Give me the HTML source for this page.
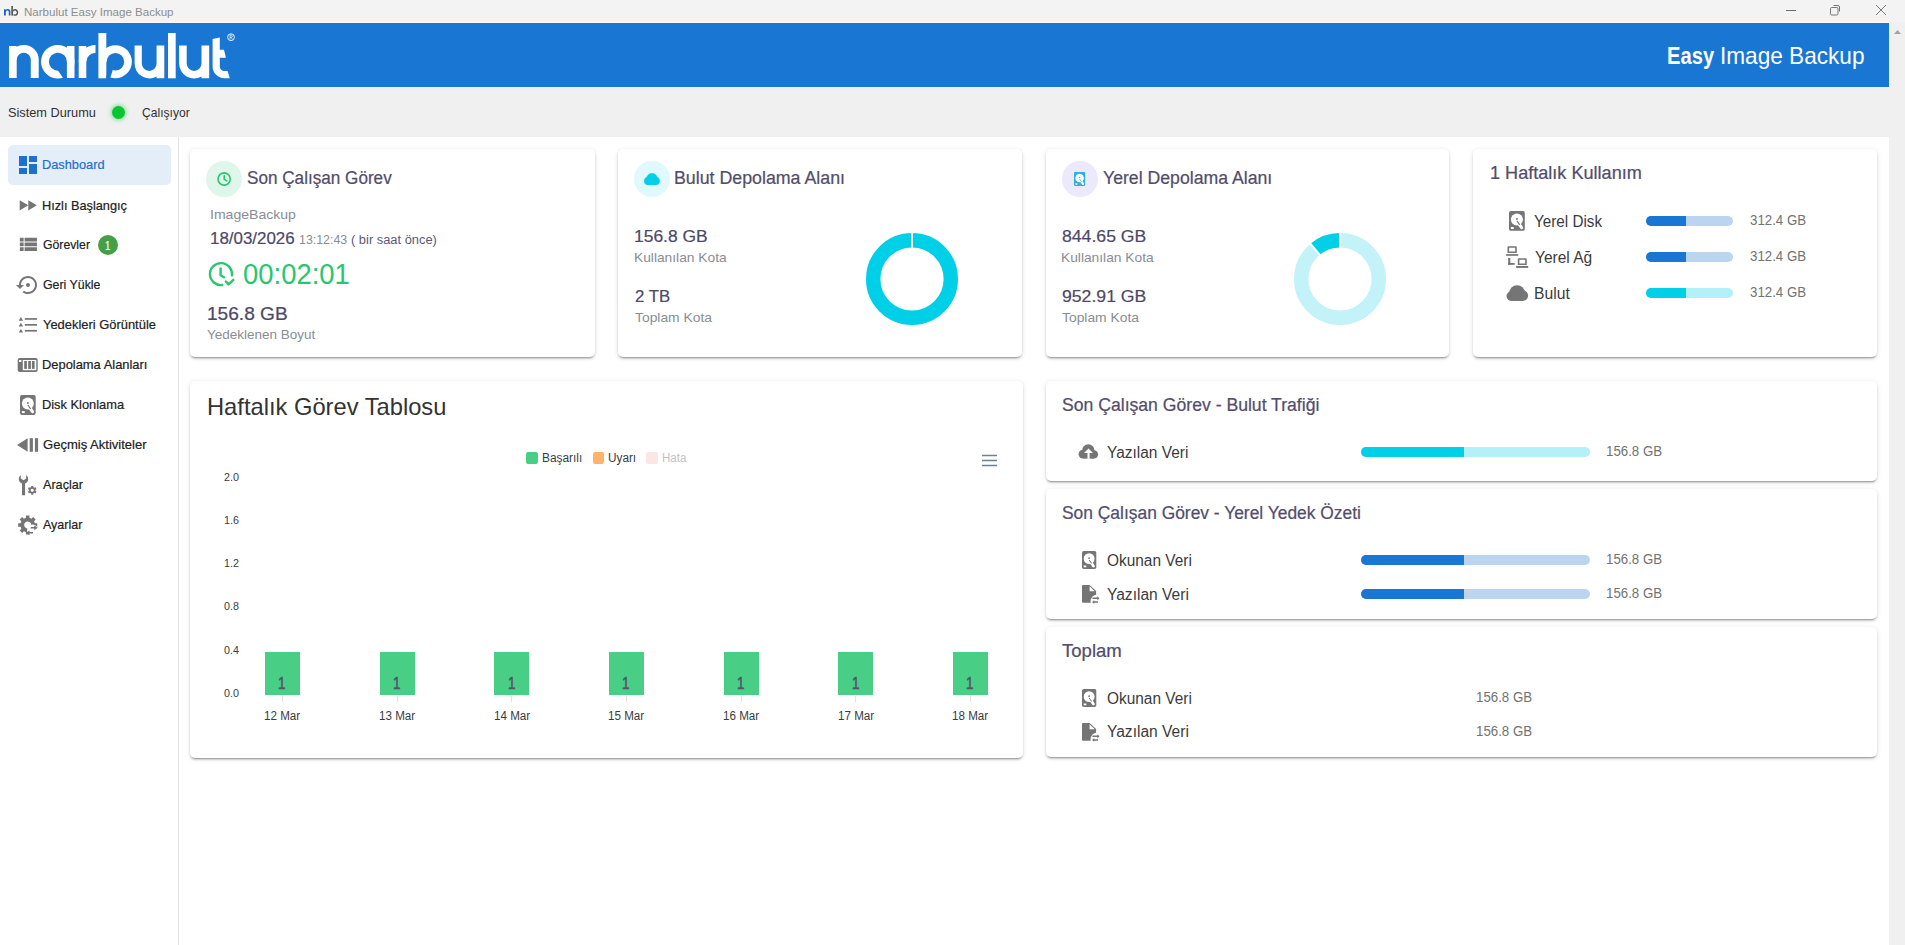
<!DOCTYPE html>
<html><head><meta charset="utf-8"><title>Narbulut Easy Image Backup</title>
<style>
html,body{margin:0;padding:0;}
body{width:1905px;height:945px;position:relative;overflow:hidden;background:#fff;font-family:"Liberation Sans",sans-serif;}
.t{position:absolute;white-space:nowrap;line-height:1;transform-origin:0 0;}
.a{position:absolute;}
.card{position:absolute;background:#fff;border-radius:5px;box-shadow:0 3px 1px -2px rgba(0,0,0,.2),0 2px 2px 0 rgba(0,0,0,.14),0 1px 5px 0 rgba(0,0,0,.12);}
svg{position:absolute;overflow:visible;}
</style></head><body>
<!-- title bar -->
<div class="a" style="left:0;top:0;width:1905px;height:22px;background:#f3f3f3"></div>
<div class="a" style="left:0;top:22px;width:1889px;height:1px;background:#fbf8f6"></div>
<div class="a" style="left:1889px;top:22px;width:16px;height:923px;background:#f0f0f0"></div>
<svg style="left:0;top:0" width="30" height="22" viewBox="0 0 30 22">
  <path d="M4 15.6V9.2h1.6v0.9c0.5-0.7 1.3-1.1 2.2-1.1 1.6 0 2.6 1 2.6 2.8v3.8H8.8v-3.6c0-1-0.5-1.6-1.4-1.6-0.9 0-1.6 0.6-1.6 1.7v3.5z" fill="#1565c0"/>
  <path d="M11.3 15.6V6.1h1.6v3.8c0.5-0.6 1.2-0.9 2.1-0.9 1.9 0 3.2 1.4 3.2 3.4s-1.4 3.4-3.3 3.4c-0.6 0-1.2-0.2-1.6-0.4l0.5-1.3c0.3 0.2 0.7 0.3 1.1 0.3 1.1 0 1.8-0.8 1.8-2s-0.8-2-1.8-2c-1.1 0-1.9 0.8-1.9 2.1v3.1z" fill="#555"/>
</svg>
<!-- window controls -->
<div class="a" style="left:1786px;top:10px;width:10px;height:1px;background:#6b6b6b"></div>
<svg style="left:1828px;top:4px" width="14" height="13" viewBox="0 0 14 13">
  <path d="M5.5 1.5h4.5a1.5 1.5 0 0 1 1.5 1.5v4.5" fill="none" stroke="#777" stroke-width="1"/>
  <rect x="2.5" y="3.5" width="7.5" height="7.5" rx="1.2" fill="none" stroke="#777" stroke-width="1"/>
</svg>
<svg style="left:1875px;top:4px" width="12" height="12" viewBox="0 0 12 12">
  <path d="M1 1L11 11M11 1L1 11" stroke="#7a7a7a" stroke-width="1"/>
</svg>
<svg style="left:1893px;top:29px" width="9" height="6" viewBox="0 0 9 6"><path d="M1 5L4.5 1L8 5z" fill="#a3a3a3"/></svg>

<!-- header -->
<div class="a" style="left:0;top:23px;width:1889px;height:64px;background:#1976d2"></div>
<svg style="left:0;top:23px" width="250" height="64" viewBox="0 23 250 64">
 <g fill="#fff">
  <!-- n -->
  <path d="M9 46H16.7V78H9z"/>
  <path d="M9 59.85A14.85 14.85 0 0 1 38.7 59.85V78H30.8V59.85A7.05 7.05 0 0 0 16.7 59.85Z"/>
  <!-- a -->
  <path d="M66.9 46H74.5V78H66.9z"/>
  <path fill-rule="evenodd" d="M41 61.7a16.75 16.75 0 1 0 33.5 0a16.75 16.75 0 1 0 -33.5 0zM48.9 61.7a9 9 0 1 0 18 0a9 9 0 1 0 -18 0z"/>
  <!-- r -->
  <path d="M78.7 46H86.3V78H78.7z"/>
  <path d="M78.7 61.7A16.8 16.8 0 0 1 95.5 44.9V53A8.9 8.9 0 0 0 86.3 61.7Z"/>
  <!-- b -->
  <path d="M98.4 33H106.3V78.3H98.4z"/>
  <path fill-rule="evenodd" d="M98.9 61.7a16.5 16.5 0 1 0 33 0a16.5 16.5 0 1 0 -33 0zM106.6 61.7a8.8 8.8 0 1 0 17.6 0a8.8 8.8 0 1 0 -17.6 0z"/>
  <!-- u -->
  <path d="M134.6 45.5H141.8V63.6A7.4 7.4 0 0 0 156.6 63.6V45.5H164.3V78.3H156.6V76.6A14.85 14.85 0 0 1 134.6 63.6Z"/>
  <!-- l -->
  <path d="M168 33H175.7V78.3H168z"/>
  <!-- u -->
  <path d="M179.1 45.5H186.7V63.6A7.4 7.4 0 0 0 201.5 63.6V45.5H209.2V78.3H201.5V76.6A15.05 15.05 0 0 1 179.1 63.6Z"/>
  <!-- t -->
  <path d="M212.6 39L219.8 37.6V49.7H224L225.9 57.7H219.8V66.5A4.6 4.6 0 0 0 224.4 71.1H227.6L229.7 78.3H224.4A11.8 11.8 0 0 1 212.6 66.5Z"/>
  <circle cx="231" cy="37.2" r="3.4" fill="none" stroke="#fff" stroke-width="0.9"/>
  <path d="M230 39.3V35.2h1.3a1.05 1.05 0 0 1 0 2.1H230M231.2 37.3L232.3 39.3" fill="none" stroke="#fff" stroke-width="0.7"/>
 </g>
 <g fill="#1976d2">
  <path d="M58 70.6L61.5 66L66.9 61.7V80H64.4Z"/>
  <path d="M106.3 61.7L109.5 66L112.6 70.6L109.6 80H106.3Z"/>
 </g>
</svg>

<!-- status bar -->
<div class="a" style="left:0;top:87px;width:1889px;height:50px;background:#f0f0f0"></div>
<div class="a" style="left:112px;top:106px;width:13px;height:13px;border-radius:50%;background:#0ac532;box-shadow:0 0 4px 1px rgba(20,210,60,.55)"></div>

<!-- sidebar -->
<div class="a" style="left:178px;top:137px;width:1px;height:808px;background:#e3e3e3"></div>
<div class="a" style="left:8px;top:145px;width:163px;height:40px;border-radius:5px;background:#e4eef9"></div>
<!-- cards -->
<div class="card" style="left:190px;top:149px;width:405px;height:208px"></div>
<div class="card" style="left:618px;top:149px;width:404px;height:208px"></div>
<div class="card" style="left:1046px;top:149px;width:403px;height:208px"></div>
<div class="card" style="left:1473px;top:149px;width:404px;height:208px"></div>
<div class="card" style="left:190px;top:381px;width:833px;height:377px"></div>
<div class="card" style="left:1046px;top:381px;width:831px;height:100px"></div>
<div class="card" style="left:1046px;top:489px;width:831px;height:130px"></div>
<div class="card" style="left:1046px;top:627px;width:831px;height:130px"></div>

<!-- card icon circles -->
<div class="a" style="left:206px;top:161px;width:36px;height:36px;border-radius:50%;background:#e1f6ea"></div>
<div class="a" style="left:634px;top:161px;width:36px;height:36px;border-radius:50%;background:#e0f9fc"></div>
<div class="a" style="left:1062px;top:161px;width:36px;height:36px;border-radius:50%;background:#ebe9fb"></div>

<!-- donuts -->
<svg style="left:860px;top:227px" width="104" height="104" viewBox="-52 -52 104 104">
  <circle r="38.8" fill="none" stroke="#00cfe8" stroke-width="14.4"/>
  <rect x="-1" y="-47" width="2" height="16" fill="#fff"/>
</svg>
<svg style="left:1288px;top:227px" width="104" height="104" viewBox="-52 -52 104 104">
  <circle r="38.8" fill="none" stroke="#c3f2f8" stroke-width="14.4"/>
  <path d="M0 -46A46 46 0 0 0 -29.57 -35.24L-20.31 -24.20A31.6 31.6 0 0 1 0 -31.6Z" fill="#00cfe8"/>
  <rect x="-1" y="-47" width="2" height="16" fill="#fff"/>
  <path d="M-30.5 -36.3L-19.6 -23.3" stroke="#fff" stroke-width="2"/>
</svg>

<!-- card4 bars -->
<div class="a" style="left:1646px;top:216px;width:87px;height:10px;border-radius:5px;background:#bbd5f1;overflow:hidden"><div style="width:40px;height:10px;background:#1976d2"></div></div>
<div class="a" style="left:1646px;top:252px;width:87px;height:10px;border-radius:5px;background:#bbd5f1;overflow:hidden"><div style="width:40px;height:10px;background:#1976d2"></div></div>
<div class="a" style="left:1646px;top:288px;width:87px;height:10px;border-radius:5px;background:#b3f0f7;overflow:hidden"><div style="width:40px;height:10px;background:#00cfe8"></div></div>

<!-- right column bars -->
<div class="a" style="left:1361px;top:447px;width:229px;height:10px;border-radius:5px;background:#b3f0f7;overflow:hidden"><div style="width:103px;height:10px;background:#00cfe8"></div></div>
<div class="a" style="left:1361px;top:555px;width:229px;height:10px;border-radius:5px;background:#bbd5f1;overflow:hidden"><div style="width:103px;height:10px;background:#1976d2"></div></div>
<div class="a" style="left:1361px;top:589px;width:229px;height:10px;border-radius:5px;background:#bbd5f1;overflow:hidden"><div style="width:103px;height:10px;background:#1976d2"></div></div>

<!-- chart -->
<div class="a" style="left:526px;top:452px;width:12px;height:12px;border-radius:2px;background:#48cf85"></div>
<div class="a" style="left:593px;top:452px;width:11px;height:12px;border-radius:2px;background:#ffb36b"></div>
<div class="a" style="left:646px;top:452px;width:12px;height:12px;border-radius:2px;background:#fbe6e6"></div>
<svg style="left:981px;top:454px" width="18" height="14" viewBox="0 0 18 14"><path d="M1 1.5H16M1 6.5H16M1 11.5H16" stroke="#6e8192" stroke-width="1.6"/></svg>
<div class="a" style="left:265px;top:652px;width:35px;height:43px;background:#48cf85"></div>
<div class="a" style="left:380px;top:652px;width:35px;height:43px;background:#48cf85"></div>
<div class="a" style="left:494px;top:652px;width:35px;height:43px;background:#48cf85"></div>
<div class="a" style="left:609px;top:652px;width:35px;height:43px;background:#48cf85"></div>
<div class="a" style="left:724px;top:652px;width:35px;height:43px;background:#48cf85"></div>
<div class="a" style="left:838px;top:652px;width:35px;height:43px;background:#48cf85"></div>
<div class="a" style="left:953px;top:652px;width:35px;height:43px;background:#48cf85"></div>
<div class="a" style="left:282px;top:696px;width:1px;height:6px;background:#e0e0e0"></div>
<div class="a" style="left:397px;top:696px;width:1px;height:6px;background:#e0e0e0"></div>
<div class="a" style="left:511px;top:696px;width:1px;height:6px;background:#e0e0e0"></div>
<div class="a" style="left:626px;top:696px;width:1px;height:6px;background:#e0e0e0"></div>
<div class="a" style="left:741px;top:696px;width:1px;height:6px;background:#e0e0e0"></div>
<div class="a" style="left:855px;top:696px;width:1px;height:6px;background:#e0e0e0"></div>
<div class="a" style="left:970px;top:696px;width:1px;height:6px;background:#e0e0e0"></div>

<!-- sidebar icons -->
<svg style="left:16px;top:153px" width="24" height="24" viewBox="0 0 24 24"><path fill="#1e6fd0" d="M3 13h8V3H3v10zm0 8h8v-6H3v6zm10 0h8V11h-8v10zm0-18v6h8V3h-8z"/></svg>
<svg style="left:0;top:190px" width="40" height="30" viewBox="0 190 40 30"><path fill="#757575" d="M19.7 200.3L28.3 205.35L19.7 210.4ZM28.3 200.3L36.8 205.35L28.3 210.4Z"/></svg>
<svg style="left:16.95px;top:232.9px" width="22.8" height="22.8" viewBox="0 0 24 24"><path fill="#757575" d="M3 14h4v-4H3v4zm0 5h4v-4H3v4zM3 9h4V5H3v4zm5 5h13v-4H8v4zm0 5h13v-4H8v4zM8 5v4h13V5H8z"/></svg>
<svg style="left:16px;top:272.8px" width="24" height="24" viewBox="0 0 24 24"><path fill="#757575" d="M14 12c0-1.1-.9-2-2-2s-2 .9-2 2 .9 2 2 2 2-.9 2-2zm-2-9c-4.97 0-9 4.03-9 9H0l4 4 4-4H5c0-3.87 3.13-7 7-7s7 3.13 7 7-3.13 7-7 7c-1.51 0-2.91-.49-4.06-1.3l-1.42 1.44C8.04 20.3 9.94 21 12 21c4.97 0 9-4.03 9-9s-4.03-9-9-9z"/></svg>
<svg style="left:0;top:310px" width="40" height="30" viewBox="0 310 40 30"><g fill="#757575">
 <path d="M20.9 317.1L23.1 320.8H18.7Z M20.9 322.8L23.1 326.6H18.7Z M20.9 328.9L23.1 332.6H18.7Z"/>
 <rect x="24.8" y="318.1" width="12.2" height="1.7"/><rect x="24.8" y="324.0" width="12.2" height="1.7"/><rect x="24.8" y="329.9" width="12.2" height="1.7"/>
</g></svg>
<svg style="left:0;top:350px" width="40" height="30" viewBox="0 350 40 30">
 <rect x="17.7" y="358" width="20" height="13.9" rx="2" fill="#757575"/>
 <rect x="22.8" y="360" width="13.5" height="10.2" fill="#fff"/>
 <rect x="19" y="360" width="2.4" height="2" fill="#fff"/>
 <g fill="#757575"><rect x="24.2" y="361" width="2.7" height="7.9"/><rect x="28.2" y="361" width="2.7" height="7.9"/><rect x="31.9" y="361" width="2.7" height="7.9"/></g>
</svg>
<svg style="left:19.90px;top:394.90px" width="15.70" height="19.90" viewBox="0 0 15.70 19.90"><rect x="0" y="0" width="15.70" height="19.90" rx="1.88" fill="#757575"/><circle cx="7.85" cy="8.56" r="5.97" fill="#fff"/><circle cx="7.85" cy="7.96" r="1.02" fill="#757575"/><path d="M8.16 10.35L12.56 16.72" stroke="#fff" stroke-width="3.14" stroke-linecap="round"/><path d="M7.85 9.95L10.68 13.93" stroke="#757575" stroke-width="1.10"/><rect x="1.88" y="16.12" width="2.83" height="1.99" fill="#fff"/></svg>
<svg style="left:0;top:430px" width="40" height="30" viewBox="0 430 40 30"><g fill="#757575">
 <path d="M17.1 445L27.6 438.2V451.8Z"/><rect x="29.7" y="438.2" width="3.2" height="13.6"/><rect x="34.9" y="438.2" width="3.2" height="13.6"/>
</g></svg>
<svg style="left:0;top:470px" width="40" height="30" viewBox="0 470 40 30"><g fill="#757575">
 <path fill-rule="evenodd" d="M18.8 479A4.7 4.7 0 0 0 22 483.4V495.2H25.1V483.4A4.7 4.7 0 0 0 28.2 479A4.7 4.7 0 0 0 26.2 475.1V478.6L23.5 480.2L20.8 478.6V475.1A4.7 4.7 0 0 0 18.8 479Z"/>
 <path fill-rule="evenodd" d="M31.15 487.07 L31.15 485.92 L33.25 485.92 L33.25 487.07 L34.48 487.77 L35.46 487.20 L36.51 489.02 L35.53 489.59 L35.53 491.01 L36.51 491.58 L35.46 493.40 L34.48 492.83 L33.25 493.53 L33.25 494.68 L31.15 494.68 L31.15 493.53 L29.92 492.83 L28.94 493.40 L27.89 491.58 L28.87 491.01 L28.87 489.59 L27.89 489.02 L28.94 487.20 L29.92 487.77Z M32.2 488.7A1.6 1.6 0 1 0 32.21 488.7Z"/>
</g></svg>
<svg style="left:0;top:510px" width="40" height="30" viewBox="0 510 40 30">
 <path fill="#757575" fill-rule="evenodd" d="M25.92 517.82 L25.94 515.46 L29.46 515.46 L29.48 517.82 L31.52 518.66 L33.20 517.01 L35.69 519.50 L34.04 521.18 L34.88 523.22 L37.24 523.24 L37.24 526.76 L34.88 526.78 L34.04 528.82 L35.69 530.50 L33.20 532.99 L31.52 531.34 L29.48 532.18 L29.46 534.54 L25.94 534.54 L25.92 532.18 L23.88 531.34 L22.20 532.99 L19.71 530.50 L21.36 528.82 L20.52 526.78 L18.16 526.76 L18.16 523.24 L20.52 523.22 L21.36 521.18 L19.71 519.50 L22.20 517.01 L23.88 518.66Z M27.7 521.4A3.6 3.6 0 1 0 27.71 521.4Z"/>
 <circle cx="32.6" cy="530.2" r="5.6" fill="#fff"/>
 <path d="M27.7 525L32 525L28 530Z" fill="#fff"/>
 <g fill="#757575"><path d="M30.8 527H34.3V525.4L37.8 527.8L34.3 530.2V528.6H30.8Z"/><path d="M26 532.8L29.5 530.4V532H33V533.6H29.5V535.2Z"/></g>
</svg>

<!-- card icons -->
<svg style="left:200px;top:155px" width="50" height="50" viewBox="200 155 50 50"><g fill="none" stroke="#28c76f" stroke-width="1.6" stroke-linecap="round" stroke-linejoin="round">
 <circle cx="224.1" cy="179" r="6.1"/><path d="M224.2 175.9V179.2L226.8 180.9"/></g></svg>
<svg style="left:640px;top:170px" width="25" height="20" viewBox="640 170 25 20"><g fill="#00cfe8">
 <circle cx="652" cy="178.7" r="5.6"/><circle cx="648" cy="181" r="3.9"/><circle cx="655.9" cy="181" r="3.9"/><rect x="648" y="180" width="8" height="4.9"/>
</g></svg>
<svg style="left:1073.80px;top:171.90px" width="11.20" height="14.00" viewBox="0 0 11.20 14.00"><rect x="0" y="0" width="11.20" height="14.00" rx="1.34" fill="#2eb0da"/><circle cx="5.60" cy="6.02" r="4.26" fill="#fff"/><circle cx="5.60" cy="5.60" r="0.73" fill="#2eb0da"/><path d="M5.82 7.28L8.96 11.76" stroke="#fff" stroke-width="2.24" stroke-linecap="round"/><path d="M5.60 7.00L7.62 9.80" stroke="#2eb0da" stroke-width="0.78"/><rect x="1.34" y="11.34" width="2.02" height="1.40" fill="#fff"/></svg>
<svg style="left:200px;top:255px" width="40" height="35" viewBox="200 255 40 35"><g fill="none" stroke="#28c76f" stroke-width="2.4" stroke-linecap="round" stroke-linejoin="round">
 <path d="M222.3 285A11 11 0 1 1 231.9 275.3"/><path d="M220.6 268.4V275.3L224 277.2"/><path d="M225.9 281.6L228.6 284.4L233.3 279.8"/>
</g></svg>
<svg style="left:1509.40px;top:211.00px" width="15.80" height="19.80" viewBox="0 0 15.80 19.80"><rect x="0" y="0" width="15.80" height="19.80" rx="1.90" fill="#757575"/><circle cx="7.90" cy="8.51" r="6.00" fill="#fff"/><circle cx="7.90" cy="7.92" r="1.03" fill="#757575"/><path d="M8.22 10.30L12.64 16.63" stroke="#fff" stroke-width="3.16" stroke-linecap="round"/><path d="M7.90 9.90L10.74 13.86" stroke="#757575" stroke-width="1.11"/><rect x="1.90" y="16.04" width="2.84" height="1.98" fill="#fff"/></svg>
<svg style="left:1500px;top:240px" width="35" height="65" viewBox="1500 240 35 65"><g fill="#757575">
 <path fill-rule="evenodd" d="M1508.5 246.2h7.3a1 1 0 0 1 1 1v5.9h-9.3v-5.9a1 1 0 0 1 1-1zM1509.1 247.7v3.9h6.1v-3.9z"/>
 <rect x="1506.1" y="254.1" width="12.1" height="1.7"/>
 <rect x="1508.2" y="258" width="2.1" height="6.8"/><rect x="1508.2" y="263" width="6.5" height="1.8"/>
 <path fill-rule="evenodd" d="M1518.8 258.2h7a1 1 0 0 1 1 1v5.9h-9v-5.9a1 1 0 0 1 1-1zM1519.4 259.7v3.9h5.8v-3.9z"/>
 <rect x="1516.1" y="266" width="12.1" height="1.9"/>
 <circle cx="1517.1" cy="293.1" r="7.9"/><circle cx="1511.3" cy="296.1" r="4.8"/><circle cx="1522.8" cy="295.6" r="5.3"/><rect x="1511.3" y="293" width="11.5" height="7.9"/>
</g></svg>
<svg style="left:1074px;top:440px" width="30" height="22" viewBox="1074 440 30 22">
 <g fill="#757575"><circle cx="1088.3" cy="450.4" r="6.1"/><circle cx="1083" cy="454.2" r="4.4"/><circle cx="1093.9" cy="454.4" r="4.2"/><rect x="1083" y="452" width="11" height="6.6"/></g>
 <path d="M1088.5 448.6L1093 453.1H1084Z" fill="#fff"/><rect x="1087.5" y="452.5" width="2.1" height="6.3" fill="#fff"/>
</svg>
<svg style="left:1081.60px;top:550.80px" width="14.30" height="17.90" viewBox="0 0 14.30 17.90"><rect x="0" y="0" width="14.30" height="17.90" rx="1.72" fill="#757575"/><circle cx="7.15" cy="7.70" r="5.43" fill="#fff"/><circle cx="7.15" cy="7.16" r="0.93" fill="#757575"/><path d="M7.44 9.31L11.44 15.04" stroke="#fff" stroke-width="2.86" stroke-linecap="round"/><path d="M7.15 8.95L9.72 12.53" stroke="#757575" stroke-width="1.00"/><rect x="1.72" y="14.50" width="2.57" height="1.79" fill="#fff"/></svg>
<svg style="left:1081.60px;top:585.00px" width="20" height="20" viewBox="0 0 20 20">
 <path d="M1 0H7.6L14.1 6.1V16.8A1 1 0 0 1 13.1 17.8H1A1 1 0 0 1 0 16.8V1A1 1 0 0 1 1 0Z" fill="#757575"/>
 <path d="M7.6 1.3L12.8 6.3H7.6Z" fill="#fff"/>
 <circle cx="15.6" cy="16.5" r="7.1" fill="#fff"/>
 <g fill="#757575"><path d="M10.5 12.6H15.4V11.3L17.4 13.35L15.4 15.4V14.1H10.5Z"/><path d="M10.2 16.95L12.2 14.9V16.2H16V17.7H12.2V19Z"/></g>
</svg>
<svg style="left:1081.60px;top:689.00px" width="14.30" height="17.90" viewBox="0 0 14.30 17.90"><rect x="0" y="0" width="14.30" height="17.90" rx="1.72" fill="#757575"/><circle cx="7.15" cy="7.70" r="5.43" fill="#fff"/><circle cx="7.15" cy="7.16" r="0.93" fill="#757575"/><path d="M7.44 9.31L11.44 15.04" stroke="#fff" stroke-width="2.86" stroke-linecap="round"/><path d="M7.15 8.95L9.72 12.53" stroke="#757575" stroke-width="1.00"/><rect x="1.72" y="14.50" width="2.57" height="1.79" fill="#fff"/></svg>
<svg style="left:1081.60px;top:723.00px" width="20" height="20" viewBox="0 0 20 20">
 <path d="M1 0H7.6L14.1 6.1V16.8A1 1 0 0 1 13.1 17.8H1A1 1 0 0 1 0 16.8V1A1 1 0 0 1 1 0Z" fill="#757575"/>
 <path d="M7.6 1.3L12.8 6.3H7.6Z" fill="#fff"/>
 <circle cx="15.6" cy="16.5" r="7.1" fill="#fff"/>
 <g fill="#757575"><path d="M10.5 12.6H15.4V11.3L17.4 13.35L15.4 15.4V14.1H10.5Z"/><path d="M10.2 16.95L12.2 14.9V16.2H16V17.7H12.2V19Z"/></g>
</svg>
<div class="a" style="left:98px;top:235px;width:20px;height:20px;border-radius:50%;background:#43a047"></div>

<div class="t" style="left:23.60px;top:6.89px;font-size:11px;color:#8d8d8d;transform:scaleX(1.0496);">Narbulut Easy Image Backup</div>
<div class="t" style="left:1666.86px;top:44.08px;font-size:24px;color:#fff;font-weight:700;transform:scaleX(0.8402);">Easy</div>
<div class="t" style="left:1719.82px;top:44.08px;font-size:24px;color:#fff;transform:scaleX(0.9419);">Image Backup</div>
<div class="t" style="left:8.40px;top:106.29px;font-size:13px;color:#303030;transform:scaleX(0.9816);">Sistem Durumu</div>
<div class="t" style="left:141.70px;top:106.29px;font-size:13px;color:#303030;transform:scaleX(0.9296);">Çalışıyor</div>
<div class="t" style="left:42.32px;top:158.39px;font-size:13px;color:#1e6fd0;transform:scaleX(0.9829);-webkit-text-stroke:0.20px #1e6fd0;">Dashboard</div>
<div class="t" style="left:42.32px;top:198.69px;font-size:13px;color:#212121;transform:scaleX(0.9791);-webkit-text-stroke:0.20px #212121;">Hızlı Başlangıç</div>
<div class="t" style="left:43.30px;top:237.99px;font-size:13px;color:#212121;transform:scaleX(0.9422);-webkit-text-stroke:0.20px #212121;">Görevler</div>
<div class="t" style="left:43.30px;top:277.99px;font-size:13px;color:#212121;transform:scaleX(0.9510);-webkit-text-stroke:0.20px #212121;">Geri Yükle</div>
<div class="t" style="left:43.30px;top:317.99px;font-size:13px;color:#212121;transform:scaleX(0.9932);-webkit-text-stroke:0.20px #212121;">Yedekleri Görüntüle</div>
<div class="t" style="left:42.31px;top:357.99px;font-size:13px;color:#212121;transform:scaleX(0.9921);-webkit-text-stroke:0.20px #212121;">Depolama Alanları</div>
<div class="t" style="left:42.31px;top:398.19px;font-size:13px;color:#212121;transform:scaleX(0.9873);-webkit-text-stroke:0.20px #212121;">Disk Klonlama</div>
<div class="t" style="left:43.30px;top:437.99px;font-size:13px;color:#212121;transform:scaleX(1.0030);-webkit-text-stroke:0.20px #212121;">Geçmiş Aktiviteler</div>
<div class="t" style="left:43.30px;top:477.79px;font-size:13px;color:#212121;transform:scaleX(0.9702);-webkit-text-stroke:0.20px #212121;">Araçlar</div>
<div class="t" style="left:43.30px;top:518.09px;font-size:13px;color:#212121;transform:scaleX(0.9612);-webkit-text-stroke:0.20px #212121;">Ayarlar</div>
<div class="t" style="left:105.20px;top:239.64px;font-size:12px;color:#fff;transform:scaleX(0.8000);-webkit-text-stroke:0.20px #fff;">1</div>
<div class="t" style="left:247.20px;top:169.16px;font-size:18px;color:#524d6b;transform:scaleX(0.9515);-webkit-text-stroke:0.22px #524d6b;">Son Çalışan Görev</div>
<div class="t" style="left:209.66px;top:208.07px;font-size:13.5px;color:#8a8d93;transform:scaleX(1.0402);">ImageBackup</div>
<div class="t" style="left:209.94px;top:230.55px;font-size:16px;color:#4d4868;transform:scaleX(1.0571);-webkit-text-stroke:0.20px #4d4868;">18/03/2026</div>
<div class="t" style="left:298.70px;top:233.94px;font-size:12px;color:#8a8d93;transform:scaleX(1.0311);">13:12:43</div>
<div class="t" style="left:351.20px;top:233.94px;font-size:12px;color:#5d5877;transform:scaleX(1.0733);">( bir saat önce)</div>
<div class="t" style="left:243.25px;top:259.85px;font-size:29px;color:#28c76f;transform:scaleX(0.9462);">00:02:01</div>
<div class="t" style="left:206.67px;top:304.64px;font-size:18.5px;color:#4d4868;transform:scaleX(1.0322);-webkit-text-stroke:0.22px #4d4868;">156.8 GB</div>
<div class="t" style="left:206.90px;top:327.97px;font-size:13.5px;color:#8a8d93;">Yedeklenen Boyut</div>
<div class="t" style="left:674.41px;top:168.96px;font-size:18px;color:#524d6b;transform:scaleX(0.9878);-webkit-text-stroke:0.22px #524d6b;">Bulut Depolama Alanı</div>
<div class="t" style="left:634.17px;top:228.01px;font-size:17px;color:#4d4868;transform:scaleX(1.0257);-webkit-text-stroke:0.20px #4d4868;">156.8 GB</div>
<div class="t" style="left:633.74px;top:251.19px;font-size:13px;color:#8a8d93;transform:scaleX(1.0594);">Kullanılan Kota</div>
<div class="t" style="left:634.80px;top:287.61px;font-size:17px;color:#4d4868;transform:scaleX(0.9870);-webkit-text-stroke:0.20px #4d4868;">2 TB</div>
<div class="t" style="left:635.20px;top:310.79px;font-size:13px;color:#8a8d93;transform:scaleX(1.0653);">Toplam Kota</div>
<div class="t" style="left:1102.50px;top:168.96px;font-size:18px;color:#524d6b;transform:scaleX(0.9812);-webkit-text-stroke:0.22px #524d6b;">Yerel Depolama Alanı</div>
<div class="t" style="left:1062.00px;top:228.01px;font-size:17px;color:#4d4868;transform:scaleX(1.0378);-webkit-text-stroke:0.20px #4d4868;">844.65 GB</div>
<div class="t" style="left:1060.94px;top:251.19px;font-size:13px;color:#8a8d93;transform:scaleX(1.0594);">Kullanılan Kota</div>
<div class="t" style="left:1062.00px;top:287.61px;font-size:17px;color:#4d4868;transform:scaleX(1.0378);-webkit-text-stroke:0.20px #4d4868;">952.91 GB</div>
<div class="t" style="left:1062.00px;top:310.79px;font-size:13px;color:#8a8d93;transform:scaleX(1.0653);">Toplam Kota</div>
<div class="t" style="left:1489.70px;top:164.26px;font-size:18px;color:#524d6b;transform:scaleX(1.0049);-webkit-text-stroke:0.22px #524d6b;">1 Haftalık Kullanım</div>
<div class="t" style="left:1534.10px;top:213.95px;font-size:16px;color:#3b3b3b;transform:scaleX(0.9525);">Yerel Disk</div>
<div class="t" style="left:1534.80px;top:249.85px;font-size:16px;color:#3b3b3b;transform:scaleX(0.9695);">Yerel Ağ</div>
<div class="t" style="left:1533.82px;top:285.65px;font-size:16px;color:#3b3b3b;transform:scaleX(0.9799);">Bulut</div>
<div class="t" style="left:1749.50px;top:213.05px;font-size:14px;color:#737373;transform:scaleX(0.9488);">312.4 GB</div>
<div class="t" style="left:1749.50px;top:249.05px;font-size:14px;color:#737373;transform:scaleX(0.9488);">312.4 GB</div>
<div class="t" style="left:1749.50px;top:285.05px;font-size:14px;color:#737373;transform:scaleX(0.9488);">312.4 GB</div>
<div class="t" style="left:207.21px;top:394.98px;font-size:24px;color:#333333;transform:scaleX(0.9878);">Haftalık Görev Tablosu</div>
<div class="t" style="left:541.80px;top:452.34px;font-size:12px;color:#373d3f;transform:scaleX(0.9889);">Başarılı</div>
<div class="t" style="left:607.90px;top:452.34px;font-size:12px;color:#373d3f;transform:scaleX(0.9811);">Uyarı</div>
<div class="t" style="left:661.50px;top:452.34px;font-size:12px;color:#c2c2c2;transform:scaleX(0.9582);">Hata</div>
<div class="t" style="left:223.80px;top:687.89px;font-size:11px;color:#373d3f;transform:scaleX(0.9754);">0.0</div>
<div class="t" style="left:223.80px;top:644.69px;font-size:11px;color:#373d3f;transform:scaleX(0.9754);">0.4</div>
<div class="t" style="left:223.80px;top:601.49px;font-size:11px;color:#373d3f;transform:scaleX(0.9754);">0.8</div>
<div class="t" style="left:223.80px;top:558.29px;font-size:11px;color:#373d3f;transform:scaleX(0.9754);">1.2</div>
<div class="t" style="left:223.80px;top:515.09px;font-size:11px;color:#373d3f;transform:scaleX(0.9754);">1.6</div>
<div class="t" style="left:223.80px;top:471.89px;font-size:11px;color:#373d3f;transform:scaleX(0.9754);">2.0</div>
<div class="t" style="left:264.40px;top:710.14px;font-size:12px;color:#373d3f;transform:scaleX(0.9692);">12 Mar</div>
<div class="t" style="left:278.26px;top:675.75px;font-size:16px;color:#56516f;transform:scaleX(0.8375);-webkit-text-stroke:0.55px #56516f;">1</div>
<div class="t" style="left:379.05px;top:710.14px;font-size:12px;color:#373d3f;transform:scaleX(0.9692);">13 Mar</div>
<div class="t" style="left:392.91px;top:675.75px;font-size:16px;color:#56516f;transform:scaleX(0.8375);-webkit-text-stroke:0.55px #56516f;">1</div>
<div class="t" style="left:493.70px;top:710.14px;font-size:12px;color:#373d3f;transform:scaleX(0.9692);">14 Mar</div>
<div class="t" style="left:507.56px;top:675.75px;font-size:16px;color:#56516f;transform:scaleX(0.8375);-webkit-text-stroke:0.55px #56516f;">1</div>
<div class="t" style="left:608.35px;top:710.14px;font-size:12px;color:#373d3f;transform:scaleX(0.9692);">15 Mar</div>
<div class="t" style="left:622.21px;top:675.75px;font-size:16px;color:#56516f;transform:scaleX(0.8375);-webkit-text-stroke:0.55px #56516f;">1</div>
<div class="t" style="left:723.00px;top:710.14px;font-size:12px;color:#373d3f;transform:scaleX(0.9692);">16 Mar</div>
<div class="t" style="left:736.86px;top:675.75px;font-size:16px;color:#56516f;transform:scaleX(0.8375);-webkit-text-stroke:0.55px #56516f;">1</div>
<div class="t" style="left:837.65px;top:710.14px;font-size:12px;color:#373d3f;transform:scaleX(0.9692);">17 Mar</div>
<div class="t" style="left:851.51px;top:675.75px;font-size:16px;color:#56516f;transform:scaleX(0.8375);-webkit-text-stroke:0.55px #56516f;">1</div>
<div class="t" style="left:952.30px;top:710.14px;font-size:12px;color:#373d3f;transform:scaleX(0.9692);">18 Mar</div>
<div class="t" style="left:966.16px;top:675.75px;font-size:16px;color:#56516f;transform:scaleX(0.8375);-webkit-text-stroke:0.55px #56516f;">1</div>
<div class="t" style="left:1062.10px;top:395.86px;font-size:18px;color:#524d6b;transform:scaleX(0.9781);-webkit-text-stroke:0.22px #524d6b;">Son Çalışan Görev - Bulut Trafiği</div>
<div class="t" style="left:1107.20px;top:444.85px;font-size:16px;color:#3b3b3b;transform:scaleX(0.9660);">Yazılan Veri</div>
<div class="t" style="left:1606.35px;top:444.35px;font-size:14px;color:#737373;transform:scaleX(0.9496);">156.8 GB</div>
<div class="t" style="left:1062.00px;top:504.16px;font-size:18px;color:#524d6b;transform:scaleX(0.9668);-webkit-text-stroke:0.22px #524d6b;">Son Çalışan Görev - Yerel Yedek Özeti</div>
<div class="t" style="left:1106.80px;top:552.85px;font-size:16px;color:#3b3b3b;transform:scaleX(0.9634);">Okunan Veri</div>
<div class="t" style="left:1106.80px;top:586.75px;font-size:16px;color:#3b3b3b;transform:scaleX(0.9720);">Yazılan Veri</div>
<div class="t" style="left:1606.35px;top:552.35px;font-size:14px;color:#737373;transform:scaleX(0.9496);">156.8 GB</div>
<div class="t" style="left:1606.35px;top:586.15px;font-size:14px;color:#737373;transform:scaleX(0.9496);">156.8 GB</div>
<div class="t" style="left:1062.00px;top:642.46px;font-size:18px;color:#524d6b;transform:scaleX(1.0310);-webkit-text-stroke:0.22px #524d6b;">Toplam</div>
<div class="t" style="left:1106.80px;top:690.55px;font-size:16px;color:#3b3b3b;transform:scaleX(0.9634);">Okunan Veri</div>
<div class="t" style="left:1106.80px;top:724.15px;font-size:16px;color:#3b3b3b;transform:scaleX(0.9720);">Yazılan Veri</div>
<div class="t" style="left:1476.05px;top:690.05px;font-size:14px;color:#737373;transform:scaleX(0.9496);">156.8 GB</div>
<div class="t" style="left:1476.05px;top:723.85px;font-size:14px;color:#737373;transform:scaleX(0.9496);">156.8 GB</div>
</body></html>
